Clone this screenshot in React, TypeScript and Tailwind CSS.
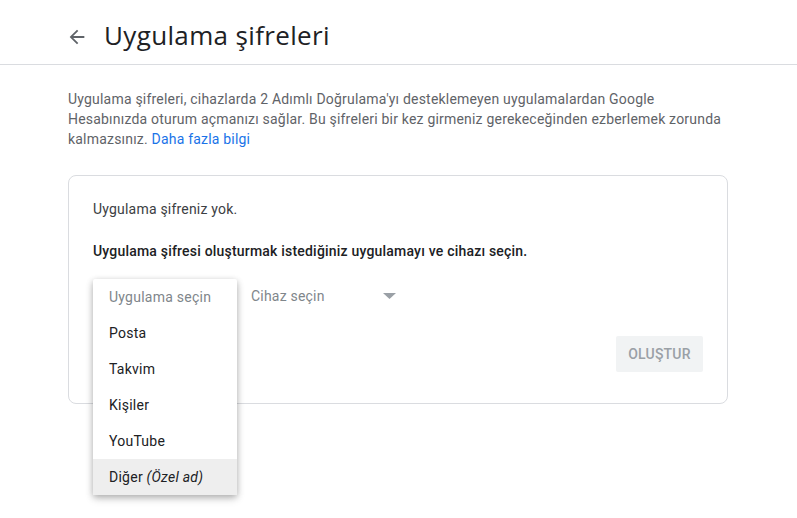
import React from "react";

export default function App() {
  return (
    <div className="w-[797px] h-[518px] bg-white overflow-hidden" style={{ fontFamily: "Roboto, Arial, sans-serif" }}>
      <header className="h-[65px] border-b border-[#dadce0] flex items-center pl-[66px]">
        <svg width="22" height="22" viewBox="0 0 24 24" className="mt-[10px]">
          <path d="M20 11H7.83l5.59-5.59L12 4l-8 8 8 8 1.41-1.41L7.83 13H20v-2z" fill="#5f6368" />
        </svg>
        <h1 className="ml-[16px] mt-[6px] text-[26px] leading-[32px] text-[#202124] font-normal tracking-[0.35px]" style={{ fontFamily: "'Open Sans', Roboto, sans-serif" }}>
          Uygulama şifreleri
        </h1>
      </header>
      <div className="pl-[68px]">
        <p className="mt-[24px] w-[660px] text-[14px] leading-[20px] text-[#5f6368] tracking-[0.2px]">
          Uygulama şifreleri, cihazlarda 2 Adımlı Doğrulama'yı desteklemeyen uygulamalardan Google Hesabınızda oturum açmanızı sağlar. Bu şifreleri bir kez girmeniz gerekeceğinden ezberlemek zorunda kalmazsınız. <a className="text-[#1a73e8]">Daha fazla bilgi</a>
        </p>
        <div className="mt-[26px] w-[660px] h-[229px] border border-[#dadce0] rounded-[8px] pl-[24px] pr-[24px] pt-[23px]">
          <p className="text-[14px] leading-[20px] text-[#3c4043] tracking-[0.2px]">Uygulama şifreniz yok.</p>
          <p className="mt-[22px] text-[14px] leading-[20px] text-[#202124] font-medium tracking-[0.2px]">
            Uygulama şifresi oluşturmak istediğiniz uygulamayı ve cihazı seçin.
          </p>
          <div className="relative mt-[17px] h-[36px] flex items-center text-[14px] tracking-[0.2px]">
            <div className="w-[144px] pl-[16px] text-[#80868b]">Uygulama seçin</div>
            <div className="ml-[14px] w-[160px] flex items-center text-[#80868b]">
              <span>Cihaz seçin</span>
              <svg width="13" height="6" viewBox="0 0 13 6" className="ml-[58px]">
                <path d="M0 0h13L6.5 6z" fill="#9aa0a6" />
              </svg>
            </div>
            <div className="absolute left-0 top-[1px] w-[144px] bg-white rounded-[2px] shadow-[0_2px_6px_rgba(0,0,0,0.25),0_4px_10px_rgba(0,0,0,0.12)] z-10 tracking-[0.25px]">
              <div className="h-[36px] flex items-center pl-[16px] text-[#80868b]">Uygulama seçin</div>
              <div className="h-[36px] flex items-center pl-[16px] text-[#202124]">Posta</div>
              <div className="h-[36px] flex items-center pl-[16px] text-[#202124]">Takvim</div>
              <div className="h-[36px] flex items-center pl-[16px] text-[#202124]">Kişiler</div>
              <div className="h-[36px] flex items-center pl-[16px] text-[#202124]">YouTube</div>
              <div className="h-[36px] flex items-center pl-[16px] text-[#202124] bg-[#eeeeee]">
                Diğer&nbsp;<i>(Özel ad)</i>
              </div>
            </div>
          </div>
          <div className="mt-[22px] flex justify-end">
            <button className="h-[36px] w-[87px] bg-[#f1f3f4] text-[#9aa0a6] text-[14px] font-medium rounded-[2px] tracking-[0.2px]">
              OLUŞTUR
            </button>
          </div>
        </div>
      </div>
    </div>
  );
}
